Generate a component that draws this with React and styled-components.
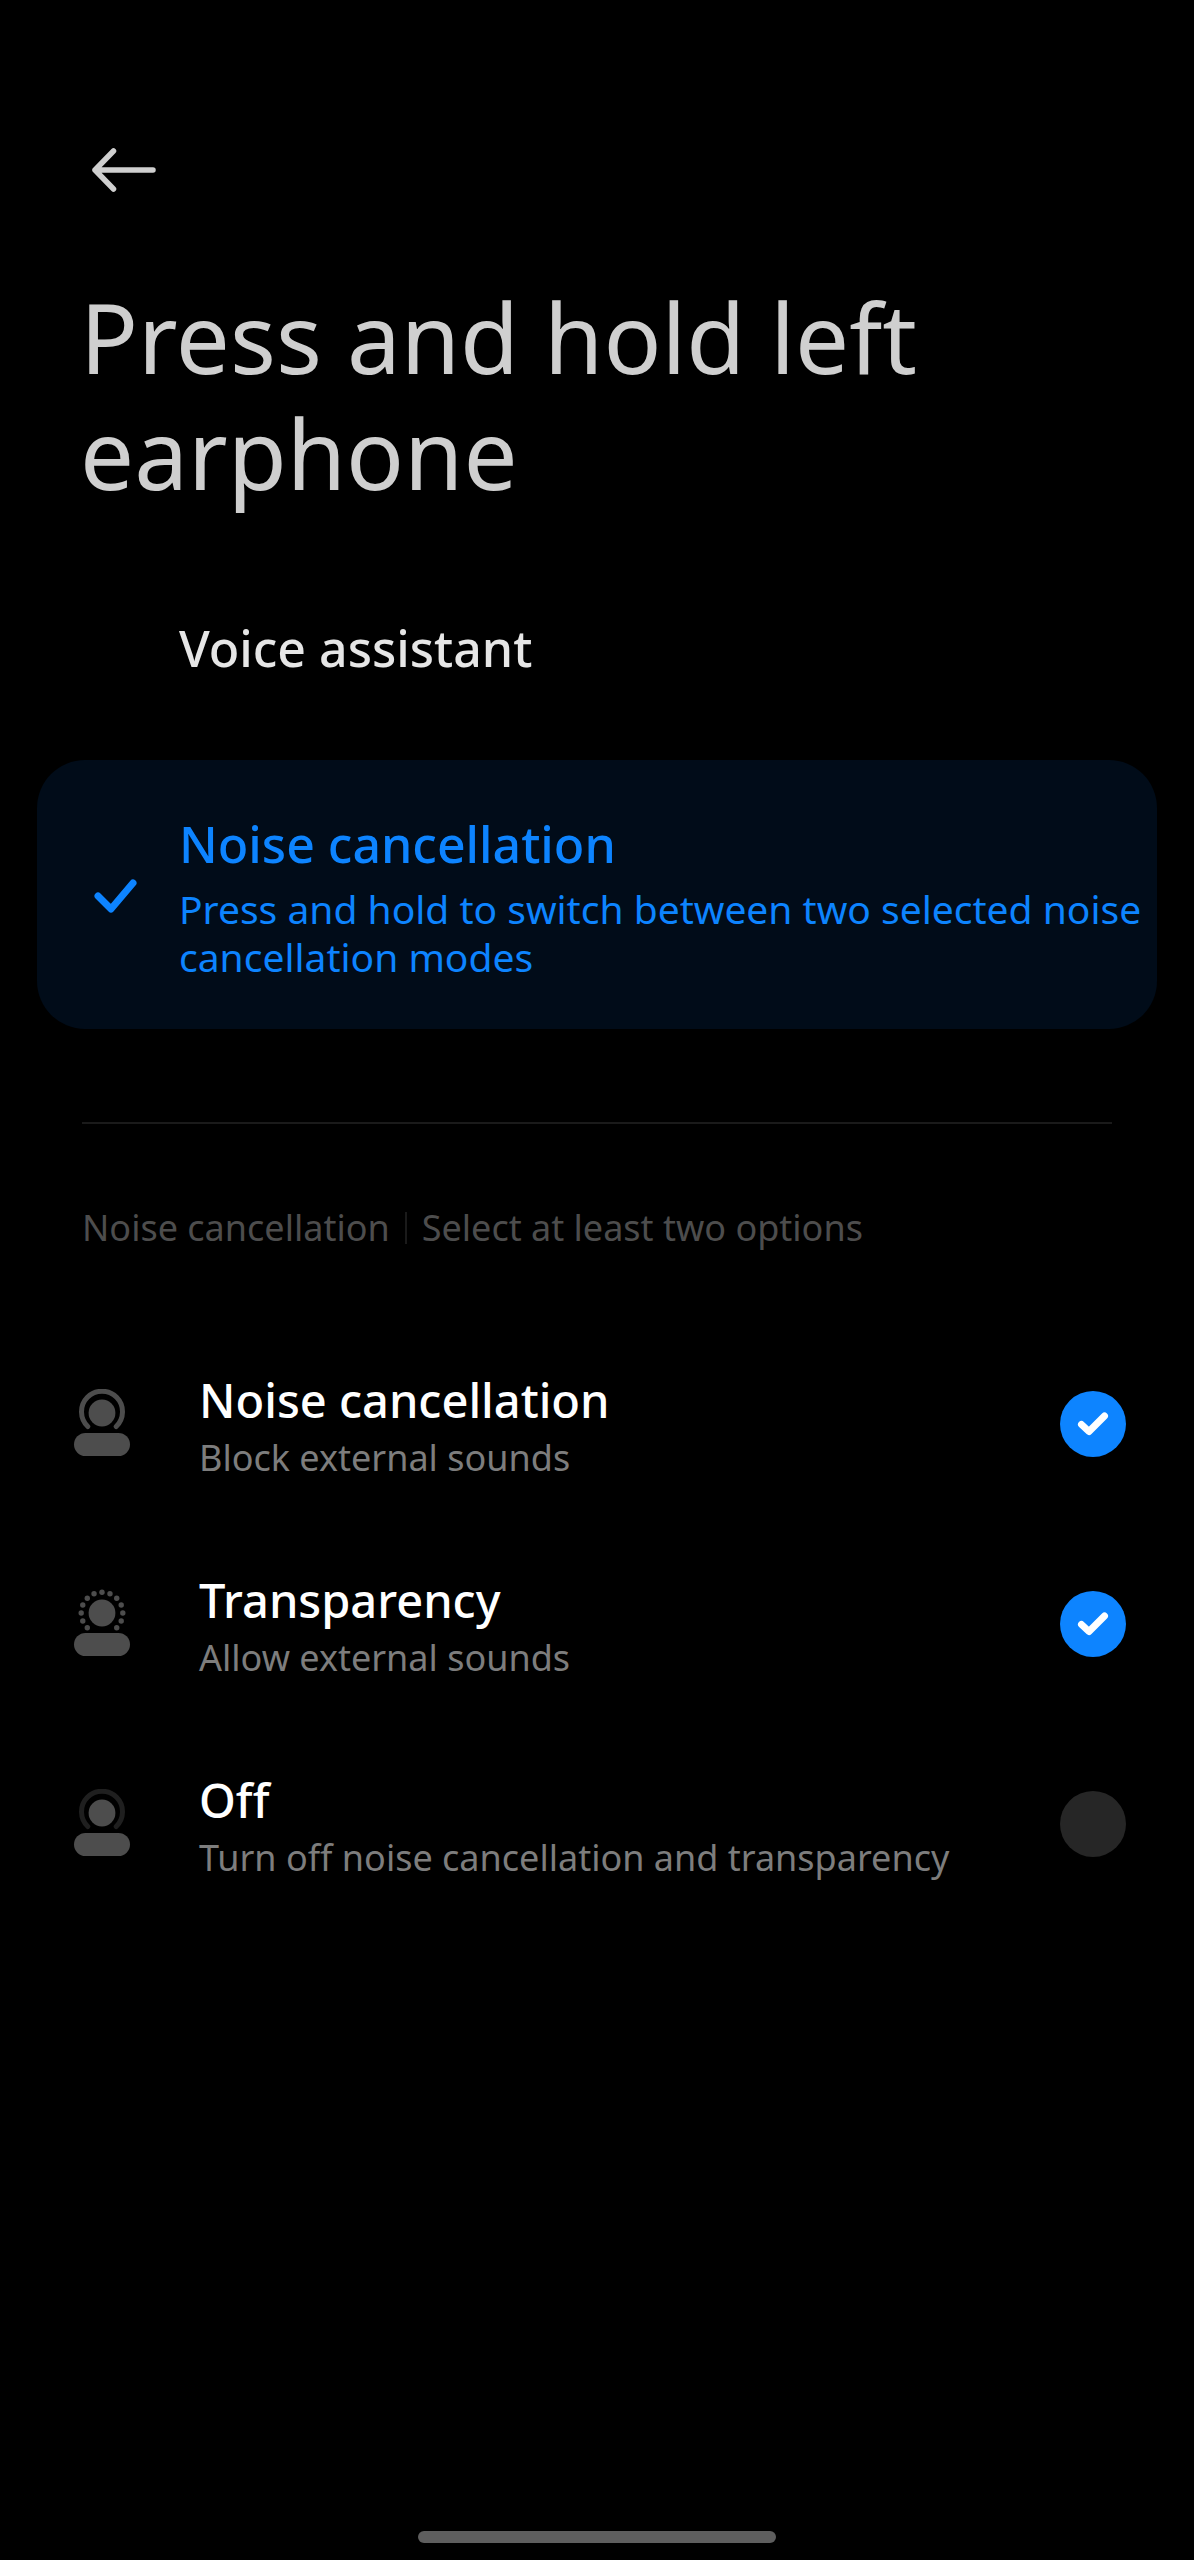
import React, { useState } from "react";

import styled, { createGlobalStyle } from "styled-components";

const MODES = [
    { id: "noise", title: "Noise cancellation", text: "Block external sounds" },
    { id: "transparency", title: "Transparency", text: "Allow external sounds" },
    { id: "off", title: "Off", text: "Turn off noise cancellation and transparency" },
];

// dots around the head of the transparency icon, from lower left to lower right
const DOTS = Array.from({ length: 13 }, (_, i) => {
    const angle = ((135 + (i * 270) / 12) * Math.PI) / 180;
    return { x: 30 + 20.8 * Math.cos(angle), y: 24 + 20.8 * Math.sin(angle) };
});

function ModeIcon({ type }) {
    return (
        <IconSvg viewBox="0 0 60 70" aria-hidden="true">
            {type === "transparency" ? (
                DOTS.map((dot, i) => <circle key={i} cx={dot.x} cy={dot.y} r="2.7" />)
            ) : (
                <path
                    d="M15.8 37.5A20.5 20.5 0 1 1 44.2 37.5"
                    fill="none"
                    stroke={type === "off" ? "#1f1f1f" : "#4d4d4d"}
                    strokeWidth="5"
                    strokeLinecap="round"
                />
            )}
            <circle cx="30" cy="24" r="13.4" />
            <rect x="2" y="44" width="56" height="23" rx="11.5" />
        </IconSvg>
    );
}

function App() {
    const [action, setAction] = useState("noise");
    const [modes, setModes] = useState(["noise", "transparency"]);

    const toggleMode = (id) => {
        setModes(modes.includes(id) ? modes.filter((mode) => mode !== id) : [...modes, id]);
    };

    return (
        <React.Fragment>
            <GlobalStyle />
            <Page>
                <BackButton type="button" aria-label="Back">
                    <svg width="64" height="44" viewBox="0 0 64 44" fill="none" stroke="#cfcfcf" strokeWidth="5.5" strokeLinecap="round" strokeLinejoin="round">
                        <path d="M21.5 3L3 22L21.5 41M3 22H61" />
                    </svg>
                </BackButton>
                <H1>Press and hold left earphone</H1>

                <Actions role="radiogroup" aria-label="Press and hold action">
                    <ActionCard $active={action === "voice"}>
                        <HiddenRadio name="action" checked={action === "voice"} onChange={() => setAction("voice")} />
                        <Tick $show={action === "voice"} />
                        <ActionTitle>Voice assistant</ActionTitle>
                    </ActionCard>
                    <ActionCard $active={action === "noise"}>
                        <HiddenRadio name="action" checked={action === "noise"} onChange={() => setAction("noise")} />
                        <Tick $show={action === "noise"} />
                        <div>
                            <ActionTitle>Noise cancellation</ActionTitle>
                            <ActionText>Press and hold to switch between two selected noise cancellation modes</ActionText>
                        </div>
                    </ActionCard>
                </Actions>

                <Divider />

                <Caption>
                    <span>Noise cancellation</span>
                    <CaptionLine />
                    <span>Select at least two options</span>
                </Caption>

                {MODES.map((mode) => (
                    <ModeRow key={mode.id}>
                        <ModeIcon type={mode.id} />
                        <ModeBody>
                            <ModeTitle>{mode.title}</ModeTitle>
                            <ModeText>{mode.text}</ModeText>
                        </ModeBody>
                        <CheckWrap>
                            <Checkbox checked={modes.includes(mode.id)} onChange={() => toggleMode(mode.id)} />
                            {modes.includes(mode.id) && (
                                <CheckSvg viewBox="0 0 66 66" aria-hidden="true">
                                    <path d="M21.5 33.5L29 40.5L44.5 25" />
                                </CheckSvg>
                            )}
                        </CheckWrap>
                    </ModeRow>
                ))}

                <HomeBar />
            </Page>
        </React.Fragment>
    );
}

function Tick({ $show }) {
    return (
        <TickBox aria-hidden="true">
            {$show && (
                <svg width="44" height="36" viewBox="0 0 44 36" fill="none" stroke="#0d84ff" strokeWidth="7" strokeLinecap="round" strokeLinejoin="round">
                    <path d="M5 19L18 32L40 6" />
                </svg>
            )}
        </TickBox>
    );
}

export default App;

const GlobalStyle = createGlobalStyle`
    body {
        margin: 0;
        background-color: #000;
        font-family: "Noto Sans", "Open Sans", sans-serif;
        font-variant-ligatures: none;
    }

    * {
        box-sizing: border-box;
    }
`;

const Page = styled.main`
    min-height: 100vh;
    display: flex;
    flex-direction: column;
    padding-top: 138px;
    background-color: #000;
`;

const BackButton = styled.button`
    align-self: flex-start;
    display: flex;
    align-items: center;
    height: 64px;
    margin-left: 92px;
    padding: 0;
    border: none;
    background: none;
    cursor: pointer;
`;

const H1 = styled.h1`
    margin: 77px 80px 0;
    font-size: 96px;
    font-weight: 400;
    line-height: 116px;
    color: #cfcfcf;
`;

const Actions = styled.div`
    display: flex;
    flex-direction: column;
    margin: 25px 37px 0;
`;

const ActionCard = styled.label`
    position: relative;
    display: flex;
    align-items: center;
    min-height: 224px;
    padding: 48px 0 48px 56px;
    border-radius: 48px;
    color: ${(props) => (props.$active ? "#0d84ff" : "#e6e6e6")};
    background-color: ${(props) => (props.$active ? "#010c19" : "transparent")};
    cursor: pointer;
`;

const HiddenRadio = styled.input.attrs({ type: "radio" })`
    position: absolute;
    margin: 0;
    opacity: 0;
`;

const TickBox = styled.span`
    flex: none;
    display: flex;
    width: 86px;
`;

const ActionTitle = styled.div`
    font-size: 50px;
    font-weight: 500;
    line-height: 72px;
`;

const ActionText = styled.div`
    margin-top: 5px;
    font-size: 39px;
    line-height: 48px;
`;

const Divider = styled.hr`
    width: auto;
    height: 2px;
    margin: 93px 82px 0;
    border: none;
    background-color: #1a1a1a;
`;

const Caption = styled.div`
    display: flex;
    align-items: center;
    gap: 15px;
    margin: 80px 82px 72px;
    font-size: 36px;
    line-height: 48px;
    color: #4d4d4d;
`;

const CaptionLine = styled.span`
    width: 2px;
    height: 32px;
    background-color: #1a1a1a;
`;

const ModeRow = styled.label`
    display: flex;
    align-items: center;
    height: 200px;
    padding: 0 68px 0 72px;
    cursor: pointer;
`;

const IconSvg = styled.svg`
    flex: none;
    width: 60px;
    height: 70px;
    fill: #4d4d4d;
`;

const ModeBody = styled.div`
    flex: 1;
    margin-left: 67px;
`;

const ModeTitle = styled.div`
    font-size: 47px;
    font-weight: 500;
    line-height: 68px;
    color: #fff;
`;

const ModeText = styled.div`
    font-size: 36px;
    line-height: 48px;
    color: #7d7d7d;
`;

const CheckWrap = styled.span`
    display: grid;
    width: 66px;
    height: 66px;
`;

const Checkbox = styled.input.attrs({ type: "checkbox" })`
    grid-area: 1 / 1;
    appearance: none;
    margin: 0;
    border-radius: 50%;
    background-color: #262626;

    &:checked {
        background-color: #0d84ff;
    }
`;

const CheckSvg = styled.svg`
    grid-area: 1 / 1;
    fill: none;
    stroke: #fff;
    stroke-width: 7;
    stroke-linecap: round;
    stroke-linejoin: round;
    pointer-events: none;
`;

const HomeBar = styled.div`
    align-self: center;
    width: 30%;
    height: 12px;
    margin: auto 0 17px;
    border-radius: 6px;
    background-color: #5e5e5e;
`;
